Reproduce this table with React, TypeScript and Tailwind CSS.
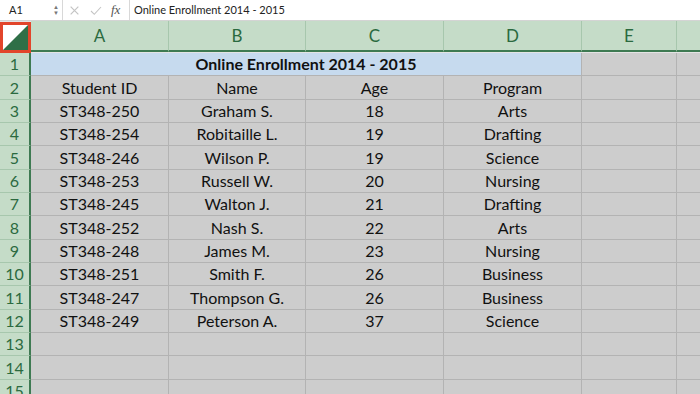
import React from 'react';

const rows: string[][] = [
  ['Student ID', 'Name', 'Age', 'Program'],
  ['ST348-250', 'Graham S.', '18', 'Arts'],
  ['ST348-254', 'Robitaille L.', '19', 'Drafting'],
  ['ST348-246', 'Wilson P.', '19', 'Science'],
  ['ST348-253', 'Russell W.', '20', 'Nursing'],
  ['ST348-245', 'Walton J.', '21', 'Drafting'],
  ['ST348-252', 'Nash S.', '22', 'Arts'],
  ['ST348-248', 'James M.', '23', 'Nursing'],
  ['ST348-251', 'Smith F.', '26', 'Business'],
  ['ST348-247', 'Thompson G.', '26', 'Business'],
  ['ST348-249', 'Peterson A.', '37', 'Science'],
  ['', '', '', ''],
  ['', '', '', ''],
  ['', '', '', ''],
];

const cols = ['A', 'B', 'C', 'D', 'E', ''];
const grid = 'grid grid-cols-[31px_138px_137px_138px_138px_95px_1fr]';

function RowHead({ n }: { n: number }) {
  return (
    <div className="h-[23.35px] bg-[#c5dcc8] border-r-2 border-r-[#3e7a52] border-b border-b-[#a7c7ad] flex items-center justify-center text-[16px] text-[#2b6a3f]">
      {n}
    </div>
  );
}

function Cell({ children, last }: { children?: React.ReactNode; last?: boolean }) {
  return (
    <div
      className={`h-[23.35px] bg-[#cdcdcd] border-b border-[#b3b3b3] flex items-center justify-center text-[16px] text-[#111] ${last ? '' : 'border-r'}`}
    >
      {children}
    </div>
  );
}

export default function App() {
  return (
    <div className="w-[700px] h-[394px] overflow-hidden bg-[#e4e4e4] font-['Lato',sans-serif]">
      {/* formula bar */}
      <div className="h-[21px] bg-white flex items-center text-[11px] text-[#222] border-b border-[#d4d4d4]">
        <div className="w-[51px] pl-[9px]">A1</div>
        <div className="w-[10px] flex flex-col items-center text-[6px] leading-[6px] text-[#777]">
          <span>▲</span>
          <span>▼</span>
        </div>
        <div className="w-px h-full bg-[#d8d8d8] ml-[1px]" />
        <div className="w-[66px] flex items-center pl-[6px] text-[#c4c4c4]">
          <svg width="11" height="11" viewBox="0 0 10 10" stroke="currentColor" strokeWidth="1.1">
            <path d="M1.5 1.5 L8.5 8.5 M8.5 1.5 L1.5 8.5" />
          </svg>
          <svg className="ml-[10px]" width="12" height="11" viewBox="0 0 12 10" stroke="currentColor" strokeWidth="1.1" fill="none">
            <path d="M1 5.5 L4.3 8.8 L11 1.5" />
          </svg>
          <span className="ml-[9px] font-['Liberation_Serif',serif] italic text-[13px] text-[#555]">fx</span>
        </div>
        <div className="w-px h-full bg-[#d8d8d8]" />
        <div className="pl-[4px]">Online Enrollment 2014 - 2015</div>
      </div>

      {/* column headers */}
      <div className={`${grid} mt-[1px]`}>
        <div className="h-[31px] border-[3px] border-[#e2452b] bg-white relative overflow-hidden">
          <svg className="absolute inset-0" width="100%" height="100%" viewBox="0 0 26 25" preserveAspectRatio="none">
            <polygon points="26,0 26,25 0,25" fill="#2f6f47" />
          </svg>
        </div>
        {cols.map((c, i) => (
          <div
            key={i}
            className={`h-[31px] mt-[-1px] bg-[#c5dcc8] border-b-2 border-b-[#3e7a52] flex items-center justify-center text-[17px] text-[#2b6a3f] ${i < cols.length - 1 ? 'border-r border-r-[#a7c7ad]' : ''}`}
          >
            {c}
          </div>
        ))}
      </div>

      {/* row 1 */}
      <div className={grid}>
        <RowHead n={1} />
        <div className="col-span-4 h-[23.35px] bg-[#c6daee] border-b border-[#b3b3b3] border-r flex items-center justify-center text-[16px] font-bold text-[#111]">
          Online Enrollment 2014 - 2015
        </div>
        <Cell />
        <Cell last />
      </div>

      {rows.map((r, i) => (
        <div key={i} className={grid}>
          <RowHead n={i + 2} />
          {r.map((v, j) => (
            <Cell key={j}>{v}</Cell>
          ))}
          <Cell />
          <Cell last />
        </div>
      ))}
    </div>
  );
}
